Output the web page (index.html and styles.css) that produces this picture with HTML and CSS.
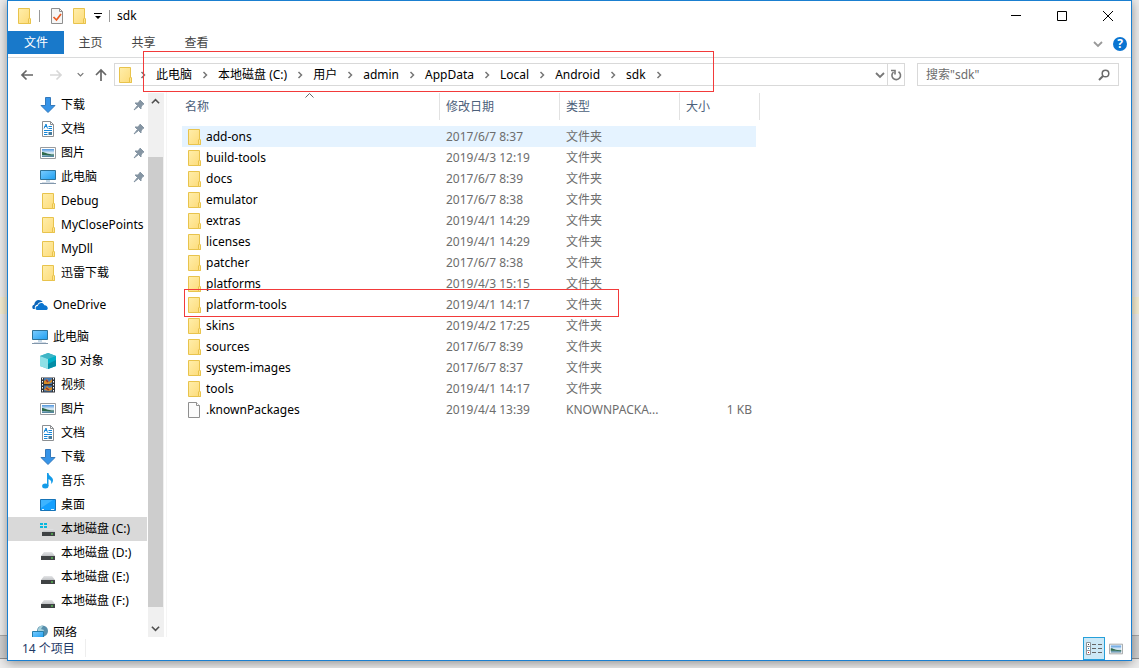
FILE: index.html
```html
<!DOCTYPE html>
<html lang="zh-CN">
<head>
<meta charset="utf-8">
<title>sdk</title>
<link rel="stylesheet" href="styles.css">
</head>
<body>
<svg class="defs" aria-hidden="true">
  <defs>
    <linearGradient id="gFolder" x1="0" y1="0" x2="1" y2="1"><stop offset="0" stop-color="#ffeeab"/><stop offset="1" stop-color="#fddb78"/></linearGradient>
    <linearGradient id="gScreen" x1="0" y1="0" x2="1" y2="1"><stop offset="0" stop-color="#7accff"/><stop offset="1" stop-color="#1f9ff0"/></linearGradient>
    <linearGradient id="gPhoto" x1="0" y1="0" x2="0" y2="1"><stop offset="0" stop-color="#4d94dd"/><stop offset=".5" stop-color="#e4f1f8"/><stop offset=".7" stop-color="#a9cbd6"/><stop offset="1" stop-color="#3f7595"/></linearGradient>
    <linearGradient id="gDrive" x1="0" y1="0" x2="0" y2="1"><stop offset="0" stop-color="#e4e5e7"/><stop offset="1" stop-color="#bfc1c4"/></linearGradient>
  </defs>
  <symbol id="folder" viewBox="0 0 16 16"><path d="M2.500.500h11v10l1 .5v4.500h-12z" fill="url(#gFolder)" stroke="#e8c34c"/><path d="M12.500 15.500v-4.500l1-1 1 1v4.500z" fill="#ffe490" stroke="#e8c34c"/></symbol>
  <symbol id="file" viewBox="0 0 16 16"><path d="M2.500.500h8l3 3v12h-11z" fill="#fbfbfb" stroke="#8f8f8f"/><path d="M10.500.500v3h3" fill="#fff" stroke="#8f8f8f"/></symbol>
  <symbol id="check" viewBox="0 0 16 16"><path d="M2.500.500h8l3 3v12h-11z" fill="#f6f6f6" stroke="#8f8f8f"/><path d="M10.500.500v3h3" fill="none" stroke="#8f8f8f"/><path d="M4.500 9l3 3 4.500-6" fill="none" stroke="#ea5b22" stroke-width="1.700"/></symbol>
  <symbol id="down" viewBox="0 0 16 16"><path d="M5.500.500h5v8h4.500L8 15.500 1 8.500h4.500z" fill="#3694e8" stroke="#3479bb"/></symbol>
  <symbol id="doc" viewBox="0 0 16 16"><path d="M2.500.500h8l3 3v12h-11z" fill="#fff" stroke="#8c8f92"/><path d="M10.500.500v3h3" fill="none" stroke="#8c8f92"/><path d="M4 7.500l2-4.500 1.500 4.500M4.500 5.500h2.500M8.500 5.500H12M8.500 7.500H12M4 9.500h8M4 11.500h3.500M4 13.500h3.500" fill="none" stroke="#1586d7"/><path d="M8.500 11h3.500v3H8.500z" fill="#477b9b"/></symbol>
  <symbol id="photo" viewBox="0 0 16 16"><path d="M.5 2.500h15v11H.5z" fill="#fff" stroke="#989b9e"/><path d="M2 4h12v8H2z" fill="url(#gPhoto)"/><path d="M2 7c3 0 5 2.500 12 2.500v1C9 10.500 6 10 2 10z" fill="#2f6a4c"/></symbol>
  <symbol id="pc" viewBox="0 0 16 16"><path d="M.5 1.500h15v9H.5z" fill="url(#gScreen)" stroke="#2e7399"/><path d="M6 12h4" stroke="#8bb2ce"/><path d="M2 13.500h12" stroke="#d4dde8"/><path d="M0 14.500h16" stroke="#8297ab"/></symbol>
  <symbol id="cloud" viewBox="0 0 16 16"><path d="M1 12c-1.500-2-.5-4 1.200-4.300C2.500 4.800 4.500 3 6.700 3 8.600 3 10 3.800 10.700 5 7.800 4.600 6 6 5.500 7.700 3.200 8 2.300 10 3 12z" fill="#0b64b8"/><path d="M5 13c-2-.5-2-3.700.8-4C6.500 6 10.600 4.700 12.400 8.200 15.500 8 17 12 14.500 13z" fill="#0b75d0"/></symbol>
  <symbol id="cube" viewBox="0 0 16 16"><path d="M0 3l8-3v16l-8-3z" fill="#52bfd0"/><path d="M8 0l8 3v10l-8 3z" fill="#00afc7"/><path d="M0 3l8 3v10l-8-3z" fill="#8ee0e6"/><path d="M0 3l8-3 8 3-8 3z" fill="#3eb5c6"/><path d="M8 11l8-4v6l-8 3z" fill="#048da5"/></symbol>
  <symbol id="video" viewBox="0 0 16 16"><path d="M1 .5h14v15H1z" fill="#303338"/><path d="M4 1h8v6H4zM4 8.500h8v6H4z" fill="#4579b2"/><path d="M4 4l3-2 2 3 3-3v3L9 7H4zM4 13l3-4 2 2 3-1v3l-3 1z" fill="#d88b25"/><path d="M6 3l2 2M6 11l3 2" stroke="#922c35" stroke-width="1.500"/><path d="M2.500 1v14M13.500 1v14" stroke="#fff" stroke-dasharray="1.500 1.500"/></symbol>
  <symbol id="music" viewBox="0 0 16 16"><ellipse cx="5.300" cy="13" rx="3.200" ry="2.500" fill="#139be8"/><path d="M7 13V0h1.500c0 3 4.500 4 4.500 7 0 2-.8 3-2 4 1-3-.8-4-2.500-5v7z" fill="#139be8"/></symbol>
  <symbol id="desktop" viewBox="0 0 16 16"><path d="M.5 2.500h15v11H.5z" fill="#14a0ff" stroke="#1674b8"/><path d="M1 11L13 3H1z" fill="#3db4ff"/><path d="M2 12.500h2M11 12.500h3" stroke="#d9f1ff"/></symbol>
  <symbol id="drive" viewBox="0 0 16 16"><path d="M4 7h8l3 4H1z" fill="url(#gDrive)"/><path d="M1 11h14v4H1z" fill="#3f4244"/><path d="M11 13h2" stroke="#63ee58"/></symbol>
  <symbol id="drivec" viewBox="0 0 16 16"><path d="M5 8h8l2 3H2z" fill="url(#gDrive)"/><path d="M2 11h13v4H2z" fill="#3f4244"/><path d="M11 13h2" stroke="#63ee58"/><path d="M0 2h3v2H0zM4 2h3v2H4zM0 5h3v2H0zM4 5h3v2H4z" fill="#08b8df"/></symbol>
  <symbol id="network" viewBox="0 0 16 16"><circle cx="10.500" cy="6" r="5.500" fill="#588fac"/><path d="M6 4c2-4 5-4 5-3L9 4l3 1-2 5H6z" fill="#a6d1dc"/><path d="M.5 6.500h11v6H.5z" fill="url(#gScreen)" stroke="#257fac"/><path d="M1 14.500h10" stroke="#8297ab"/></symbol>
  <symbol id="pin" viewBox="0 0 12 12"><path d="M7 1l4 4-1.300.5L8 8v2L5.500 7.500 1 11l3.500-4.500L2 4h2.500L7 2z" fill="#8595a3" stroke="#8595a3"/></symbol>
  <symbol id="chev" viewBox="0 0 8 8"><path d="M2.500 1l3 3-3 3" fill="none" stroke="#777" stroke-width="1.500"/></symbol>
  <symbol id="vee" viewBox="0 0 10 10"><path d="M1 3l4 4 4-4" fill="none" stroke="currentColor" stroke-width="1.800"/></symbol>
</svg>

<div class="desk-band band-yellow"></div>
<div class="desk-band band-gray"></div>

<main class="window">
  <header class="titlebar">
    <svg class="icon"><use href="#folder"/></svg>
    <span class="bar"></span>
    <button class="quick" aria-label="属性"><svg class="icon"><use href="#check"/></svg></button>
    <button class="quick" aria-label="新建文件夹"><svg class="icon"><use href="#folder"/></svg></button>
    <button class="quick more" aria-label="自定义"><svg width="8" height="8" viewBox="0 0 8 8"><path d="M0 1h8v1H0zM1 4h6L4 7z"/></svg></button>
    <span class="bar end"></span>
    <h1 class="title">sdk</h1>
    <div class="controls">
      <button aria-label="最小化"><svg width="12" height="12" viewBox="0 0 12 12"><path d="M1 5.500h10" fill="none" stroke="#000"/></svg></button>
      <button aria-label="最大化"><svg width="12" height="12" viewBox="0 0 12 12"><path d="M1.500 1.500h9v9h-9z" fill="none" stroke="#000"/></svg></button>
      <button aria-label="关闭"><svg width="12" height="12" viewBox="0 0 12 12"><path d="M1 1l10 10M11 1L1 11" fill="none" stroke="#000"/></svg></button>
    </div>
  </header>

  <nav class="tabs">
    <button class="tab active">文件</button>
    <button class="tab">主页</button>
    <button class="tab">共享</button>
    <button class="tab">查看</button>
    <div class="tabs-end">
      <button class="expand" aria-label="展开功能区"><svg width="10" height="10"><use href="#vee"/></svg></button>
      <button class="help" aria-label="帮助">?</button>
    </div>
  </nav>

  <div class="addressbar">
    <div class="arrows">
      <button class="back" aria-label="后退"><svg width="14" height="12" viewBox="0 0 14 12"><path d="M13 6H2M6.500 1.500L2 6l4.500 4.500" fill="none" stroke="#666" stroke-width="1.700"/></svg></button>
      <button class="forward" aria-label="前进"><svg width="14" height="12" viewBox="0 0 14 12"><path d="M1 6h11M7.500 1.500L12 6l-4.500 4.500" fill="none" stroke="#d7d7d7" stroke-width="1.700"/></svg></button>
      <button class="recent" aria-label="最近位置"><svg width="7" height="7"><use href="#vee"/></svg></button>
      <button class="up" aria-label="向上"><svg width="12" height="14" viewBox="0 0 12 14"><path d="M6 13V2M1 7l5-5 5 5" fill="none" stroke="#666" stroke-width="1.700"/></svg></button>
    </div>
    <div class="path">
      <svg class="icon"><use href="#folder"/></svg>
      <svg class="sep first"><use href="#chev"/></svg>
      <button class="crumb">此电脑</button><svg class="sep"><use href="#chev"/></svg>
      <button class="crumb">本地磁盘 (C:)</button><svg class="sep"><use href="#chev"/></svg>
      <button class="crumb">用户</button><svg class="sep"><use href="#chev"/></svg>
      <button class="crumb">admin</button><svg class="sep"><use href="#chev"/></svg>
      <button class="crumb">AppData</button><svg class="sep"><use href="#chev"/></svg>
      <button class="crumb">Local</button><svg class="sep"><use href="#chev"/></svg>
      <button class="crumb">Android</button><svg class="sep"><use href="#chev"/></svg>
      <button class="crumb">sdk</button><svg class="sep"><use href="#chev"/></svg>
      <button class="history" aria-label="以前的位置"><svg width="10" height="10"><use href="#vee"/></svg></button>
      <button class="refresh" aria-label="刷新"><svg width="12" height="12" viewBox="0 0 12 12"><path d="M3.500 3a4.300 4.300 0 1 0 5 -.3M1 1.500h4v4" fill="none" stroke="#777" stroke-width="1.600"/></svg></button>
      <span class="mark path-mark"></span>
    </div>
    <label class="search">
      <input type="text" placeholder="搜索&quot;sdk&quot;" aria-label="搜索">
      <svg width="12" height="12" viewBox="0 0 12 12"><circle cx="7.500" cy="4.500" r="3.300" fill="none" stroke="#6b6b6b" stroke-width="1.500"/><path d="M5 7l-4 4" stroke="#6b6b6b" stroke-width="2"/></svg>
    </label>
  </div>

  <div class="content">
    <nav class="tree">
      <a class="node" href="#"><svg class="icon"><use href="#down"/></svg><span>下载</span><svg class="pin"><use href="#pin"/></svg></a>
      <a class="node" href="#"><svg class="icon"><use href="#doc"/></svg><span>文档</span><svg class="pin"><use href="#pin"/></svg></a>
      <a class="node" href="#"><svg class="icon"><use href="#photo"/></svg><span>图片</span><svg class="pin"><use href="#pin"/></svg></a>
      <a class="node" href="#"><svg class="icon"><use href="#pc"/></svg><span>此电脑</span><svg class="pin"><use href="#pin"/></svg></a>
      <a class="node" href="#"><svg class="icon"><use href="#folder"/></svg><span>Debug</span></a>
      <a class="node" href="#"><svg class="icon"><use href="#folder"/></svg><span>MyClosePoints</span></a>
      <a class="node" href="#"><svg class="icon"><use href="#folder"/></svg><span>MyDll</span></a>
      <a class="node" href="#"><svg class="icon"><use href="#folder"/></svg><span>迅雷下载</span></a>
      <a class="node root" href="#"><svg class="icon"><use href="#cloud"/></svg><span>OneDrive</span></a>
      <a class="node root" href="#"><svg class="icon"><use href="#pc"/></svg><span>此电脑</span></a>
      <a class="node" href="#"><svg class="icon"><use href="#cube"/></svg><span>3D 对象</span></a>
      <a class="node" href="#"><svg class="icon"><use href="#video"/></svg><span>视频</span></a>
      <a class="node" href="#"><svg class="icon"><use href="#photo"/></svg><span>图片</span></a>
      <a class="node" href="#"><svg class="icon"><use href="#doc"/></svg><span>文档</span></a>
      <a class="node" href="#"><svg class="icon"><use href="#down"/></svg><span>下载</span></a>
      <a class="node" href="#"><svg class="icon"><use href="#music"/></svg><span>音乐</span></a>
      <a class="node" href="#"><svg class="icon"><use href="#desktop"/></svg><span>桌面</span></a>
      <a class="node selected" href="#"><svg class="icon"><use href="#drivec"/></svg><span>本地磁盘 (C:)</span></a>
      <a class="node" href="#"><svg class="icon"><use href="#drive"/></svg><span>本地磁盘 (D:)</span></a>
      <a class="node" href="#"><svg class="icon"><use href="#drive"/></svg><span>本地磁盘 (E:)</span></a>
      <a class="node" href="#"><svg class="icon"><use href="#drive"/></svg><span>本地磁盘 (F:)</span></a>
      <a class="node root" href="#"><svg class="icon"><use href="#network"/></svg><span>网络</span></a>
    </nav>
    <div class="scrollbar">
      <button class="flip" aria-label="向上滚动"><svg width="9" height="9"><use href="#vee"/></svg></button>
      <div class="track"><div class="thumb"></div></div>
      <button aria-label="向下滚动"><svg width="9" height="9"><use href="#vee"/></svg></button>
    </div>
    <section class="files">
      <table>
        <colgroup><col class="c-name"><col class="c-date"><col class="c-type"><col class="c-size"></colgroup>
        <thead><tr>
          <th><span>名称</span><svg class="sort" width="9" height="5" viewBox="0 0 9 5"><path d="M.5 4.500l4-4 4 4" fill="none" stroke="#666"/></svg></th>
          <th><span>修改日期</span></th><th><span>类型</span></th><th><span>大小</span></th>
        </tr></thead>
        <tbody>
          <tr class="hover"><td><div class="name"><svg class="icon"><use href="#folder"/></svg>add-ons</div></td><td>2017/6/7 8:37</td><td>文件夹</td><td></td></tr>
          <tr><td><div class="name"><svg class="icon"><use href="#folder"/></svg>build-tools</div></td><td>2019/4/3 12:19</td><td>文件夹</td><td></td></tr>
          <tr><td><div class="name"><svg class="icon"><use href="#folder"/></svg>docs</div></td><td>2017/6/7 8:39</td><td>文件夹</td><td></td></tr>
          <tr><td><div class="name"><svg class="icon"><use href="#folder"/></svg>emulator</div></td><td>2017/6/7 8:38</td><td>文件夹</td><td></td></tr>
          <tr><td><div class="name"><svg class="icon"><use href="#folder"/></svg>extras</div></td><td>2019/4/1 14:29</td><td>文件夹</td><td></td></tr>
          <tr><td><div class="name"><svg class="icon"><use href="#folder"/></svg>licenses</div></td><td>2019/4/1 14:29</td><td>文件夹</td><td></td></tr>
          <tr><td><div class="name"><svg class="icon"><use href="#folder"/></svg>patcher</div></td><td>2017/6/7 8:38</td><td>文件夹</td><td></td></tr>
          <tr><td><div class="name"><svg class="icon"><use href="#folder"/></svg>platforms</div></td><td>2019/4/3 15:15</td><td>文件夹</td><td></td></tr>
          <tr><td><div class="name"><svg class="icon"><use href="#folder"/></svg>platform-tools<span class="mark row-mark"></span></div></td><td>2019/4/1 14:17</td><td>文件夹</td><td></td></tr>
          <tr><td><div class="name"><svg class="icon"><use href="#folder"/></svg>skins</div></td><td>2019/4/2 17:25</td><td>文件夹</td><td></td></tr>
          <tr><td><div class="name"><svg class="icon"><use href="#folder"/></svg>sources</div></td><td>2017/6/7 8:39</td><td>文件夹</td><td></td></tr>
          <tr><td><div class="name"><svg class="icon"><use href="#folder"/></svg>system-images</div></td><td>2017/6/7 8:37</td><td>文件夹</td><td></td></tr>
          <tr><td><div class="name"><svg class="icon"><use href="#folder"/></svg>tools</div></td><td>2019/4/1 14:17</td><td>文件夹</td><td></td></tr>
          <tr><td><div class="name"><svg class="icon"><use href="#file"/></svg>.knownPackages</div></td><td>2019/4/4 13:39</td><td>KNOWNPACKA...</td><td>1 KB</td></tr>
        </tbody>
      </table>
    </section>
  </div>

  <footer class="status">
    <span class="count">14 个项目</span>
    <div class="views">
      <button class="view on" aria-label="详细信息"><svg width="16" height="14" viewBox="0 0 16 14"><path d="M.5.5h4v4h-4zM.5 4.500h4v4h-4zM.5 8.500h4v4h-4z" fill="#fff" stroke="#8d959b"/><path d="M2 2.500h1" stroke="#444"/><path d="M2 6.500h1" stroke="#1b82cf"/><path d="M2 10.500h1" stroke="#c22"/><path d="M6 2.500h4M12 2.500h4M6 6.500h4M12 6.500h4M6 10.500h4M12 10.500h4" stroke="#666"/></svg></button>
      <button class="view" aria-label="大图标"><svg width="14" height="14"><use href="#photo"/></svg></button>
    </div>
  </footer>
</main>
</body>
</html>
```
FILE: styles.css
```css
* { box-sizing: border-box; }

body {
  margin: 0;
  height: 100vh;
  padding: 0 7px 7px;
  background: #ececec;
  color: #000;
  font: 12px/20px "Noto Sans", "Noto Sans CJK SC", sans-serif;
  overflow: hidden;
}

.defs { position: absolute; width: 0; height: 0; }

button {
  display: flex;
  align-items: center;
  justify-content: center;
  flex: none;
  margin: 0;
  padding: 0;
  border: 0;
  background: none;
  color: inherit;
  font: inherit;
  white-space: nowrap;
}

svg { display: block; flex: none; }
.icon { width: 16px; height: 16px; }

.desk-band { position: absolute; left: 0; right: 0; }
.band-yellow { top: 297px; height: 17px; background: #f5eed2; }
.band-gray {
  bottom: 9px;
  height: 24px;
  background: #cfcfcf;
  border-top: 1px solid #a8a8a8;
  border-bottom: 1px solid #8f8f8f;
}

.window {
  position: relative;
  display: flex;
  flex-direction: column;
  height: 100%;
  background: #fff;
  border: 1px solid #1a7fd0;
  box-shadow: 0 2px 10px rgba(0, 0, 0, .4);
}

/* Title bar */
.titlebar {
  display: flex;
  align-items: center;
  flex: none;
  height: 30px;
  padding-left: 8px;
}
.bar { width: 1px; height: 12px; background: #999; margin: 0 9px 0 7px; }
.bar.end { margin: 0 7px 0 6px; }
.quick { width: 16px; margin-right: 6px; }
.quick.more { width: 10px; margin-right: 0; }
.title { margin: 0; font: inherit; }
.controls { display: flex; margin-left: auto; }
.controls button { width: 46px; height: 30px; }

/* Ribbon tabs */
.tabs {
  display: flex;
  flex: none;
  height: 27px;
  border-bottom: 1px solid #dadbdc;
  color: #444;
}
.tab { width: 53px; height: 24px; }
.tab.active { width: 56px; height: 23px; background: #1979ca; color: #fff; }
.tabs-end {
  display: flex;
  align-items: center;
  gap: 10px;
  margin-left: auto;
  padding-right: 4px;
}
.expand { color: #999; }
.help {
  width: 14px;
  height: 14px;
  border-radius: 50%;
  background: #0a74d1;
  color: #fff;
  font-weight: bold;
}

/* Address row */
.addressbar {
  display: flex;
  flex: none;
  height: 34px;
  padding: 5px 12px 6px;
}
.arrows { display: flex; width: 94px; gap: 15px; color: #777; }
.recent { margin: 0 -4px 0 -1px; }
.path {
  position: relative;
  display: flex;
  align-items: center;
  flex: 1;
  min-width: 0;
  border: 1px solid #d9d9d9;
  padding-left: 2px;
}
.sep { width: 8px; height: 8px; margin: 0 9px; }
.sep.first { margin: 0 9px 0 6px; }
.history { margin-left: auto; width: 15px; color: #777; }
.refresh { width: 17px; height: 100%; border-left: 1px solid #d9d9d9; }
.search {
  display: flex;
  align-items: center;
  width: 202px;
  margin-left: 12px;
  padding: 0 8px;
  border: 1px solid #d9d9d9;
}
.search input {
  flex: 1;
  min-width: 0;
  padding: 0;
  border: 0;
  outline: 0;
  background: none;
  font: inherit;
}
.search input::placeholder { color: #6d6d6d; opacity: 1; }

.mark { position: absolute; border: 1px solid #f23a3a; pointer-events: none; }
.path-mark { left: 28px; top: -13px; width: 571px; height: 41px; }
.row-mark { left: 2px; top: -6px; width: 435px; height: 28px; }

/* Content */
.content { display: flex; flex: 1; min-height: 0; }
.tree { width: 140px; padding-top: 1px; overflow: hidden; }
.node {
  display: flex;
  align-items: center;
  gap: 5px;
  height: 24px;
  padding-left: 32px;
  color: inherit;
  text-decoration: none;
  white-space: nowrap;
}
.node.root { margin-top: 8px; padding-left: 24px; }
.node.selected { background: #d9d9d9; margin-right: 1px; }
.pin { width: 12px; height: 12px; margin: 0 3px 0 auto; }
.scrollbar {
  display: flex;
  flex-direction: column;
  width: 16px;
  margin-top: 1px;
  background: #f0f0f0;
  color: #505050;
}
.scrollbar button { height: 17px; padding-right: 1px; }
.scrollbar .flip { padding: 0 0 0 1px; transform: rotate(180deg); }
.track { display: flex; flex: 1; padding: 47px 1px 13px 0; }
.thumb { flex: 1; background: #cdcdcd; }

.files {
  flex: 1;
  min-width: 0;
  margin-left: 2px;
  padding: 1px 0 0 15px;
  border-left: 1px solid #f5f5f5;
}
table {
  width: 578px;
  table-layout: fixed;
  border-collapse: separate;
  border-spacing: 0;
}
.c-name { width: 258px; }
.c-date, .c-type { width: 120px; }
.c-size { width: 80px; }
th {
  position: relative;
  height: 33px;
  padding: 0;
  vertical-align: top;
  text-align: left;
  font-weight: normal;
  color: #4c607a;
}
th span {
  display: block;
  padding: 4px 0 3px 6px;
  border-right: 1px solid #e2e2e2;
}
th:first-child span { padding-left: 3px; }
.sort { position: absolute; top: 0; left: 123px; }
td { height: 21px; padding: 0 0 0 6px; color: #6d6d6d; }
td:first-child { padding: 0; color: #000; }
td:last-child {
  padding: 0 4px 0 0;
  text-align: right;
  border-right: 4px solid #fff;
}
.name {
  position: relative;
  display: flex;
  align-items: center;
  gap: 4px;
  padding-left: 4px;
}
.hover { background: #e5f3ff; }

/* Status bar */
.status {
  display: flex;
  justify-content: space-between;
  flex: none;
  height: 23px;
  color: #1e3966;
}
.count {
  height: 18px;
  margin: 2px 0;
  padding: 0 10px 0 14px;
  border-right: 1px solid #eee;
}
.views { display: flex; padding-right: 4px; }
.view { width: 22px; height: 23px; }
.view.on { background: #cce8f6; border: 1px solid #26a0da; }
```
